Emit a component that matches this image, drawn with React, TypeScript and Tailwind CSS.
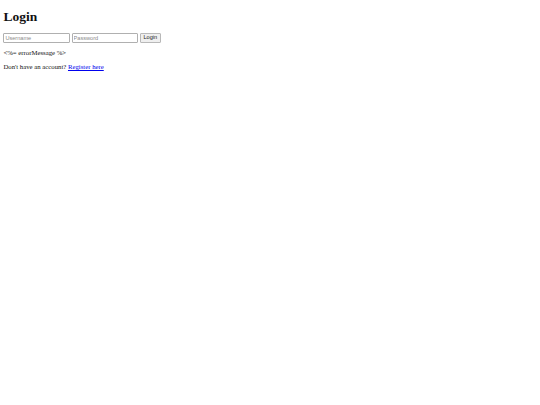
export default function App() {
  return (
    <div className="min-h-screen bg-white px-[3.4px] text-[#111] [font-family:'Liberation_Serif','Times_New_Roman',serif]">
      <h1 className="m-0 pt-[9px] pb-[8.6px] text-[13.5px] font-bold leading-[15.6px]">Login</h1>
      <form className="flex items-center gap-[1.7px]" onSubmit={(e) => e.preventDefault()}>
        <input
          type="text"
          placeholder="Username"
          className="box-border h-[9.5px] w-[66.5px] rounded-[1px] border border-[#b0b0b0] bg-white px-[1px] py-0 text-[5.6px] leading-[7px] outline-none placeholder:text-[#8a8a8a] [font-family:'Liberation_Sans',Arial,sans-serif]"
        />
        <input
          type="password"
          placeholder="Password"
          className="box-border h-[9.5px] w-[66.5px] rounded-[1px] border border-[#b0b0b0] bg-white px-[1px] py-0 text-[5.6px] leading-[7px] outline-none placeholder:text-[#8a8a8a] [font-family:'Liberation_Sans',Arial,sans-serif]"
        />
        <button
          type="submit"
          className="box-border h-[9.5px] w-[21px] rounded-[1px] border border-[#b8b8b8] bg-[#efefef] p-0 text-center text-[5.6px] leading-[7px] text-[#222] [font-family:'Liberation_Sans',Arial,sans-serif]"
        >
          Login
        </button>
      </form>
      <p className="mt-[6.75px] text-[6.75px] leading-[7.8px]">&lt;%= errorMessage %&gt;</p>
      <p className="mt-[6.2px] text-[6.75px] leading-[7.8px]">
        Don&apos;t have an account?{' '}
        <a href="#register" className="text-[#0000ee] underline">
          Register here
        </a>
      </p>
    </div>
  );
}
